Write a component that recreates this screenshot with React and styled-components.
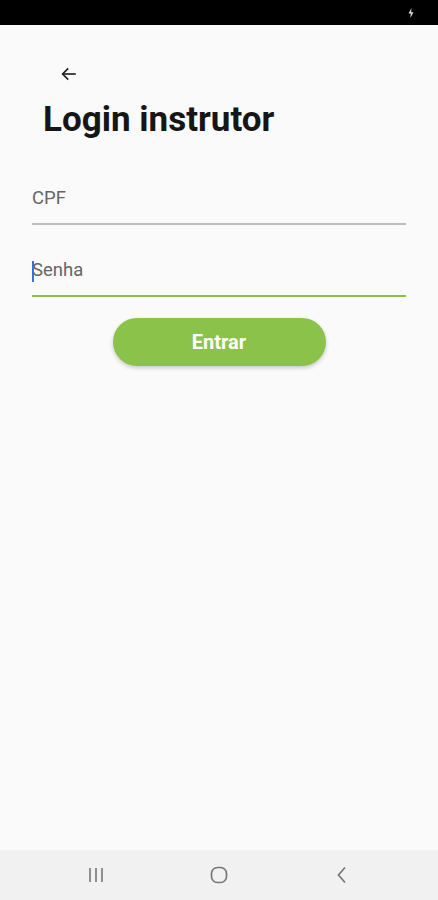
import React from 'react'
import styled, { createGlobalStyle } from 'styled-components'

const GlobalStyle = createGlobalStyle`
    html, body {
        margin: 0;
        padding: 0;
        background: #fafafa;
        font-family: Roboto, "Liberation Sans", sans-serif;
    }
`

const Screen = styled.div`
    width: 438px;
    height: 900px;
    display: flex;
    flex-direction: column;
    background: #fafafa;
`

const StatusBar = styled.div`
    height: 25px;
    background: #000;
    display: flex;
    justify-content: flex-end;
    align-items: center;
    padding-right: 24px;
    flex-shrink: 0;
`

const Content = styled.div`
    flex: 1;
    display: flex;
    flex-direction: column;
    padding: 0 32px;
`

const BackButton = styled.button`
    background: none;
    border: none;
    padding: 0;
    margin: 37px 0 0 25px;
    width: 24px;
    height: 24px;
    display: flex;
    align-items: center;
    justify-content: center;
    color: #212121;
`

const Title = styled.h1`
    margin: 13px 0 0 11px;
    font-size: 35px;
    font-weight: 700;
    color: #161616;
    line-height: 42px;
`

const Field = styled.div`
    display: flex;
    align-items: center;
    height: 50px;
    box-sizing: border-box;
    padding-bottom: 2px;
    margin-top: ${p => p.top}px;
    border-bottom: 2px solid ${p => (p.focused ? '#8bc34a' : '#bdbdbd')};
    font-size: 18.5px;
    color: #666;
    position: relative;
`

const Caret = styled.span`
    position: absolute;
    left: 0;
    top: 14px;
    width: 2px;
    height: 21px;
    background: #3b6fd8;
`

const ButtonRow = styled.div`
    display: flex;
    justify-content: center;
    margin-top: 21px;
`

const SubmitButton = styled.button`
    width: 213px;
    height: 48px;
    border: none;
    border-radius: 24px;
    background: #8bc34a;
    color: #fff;
    font-family: Roboto, "Liberation Sans", sans-serif;
    font-size: 20px;
    font-weight: 700;
    box-shadow: 0 2px 4px rgba(0, 0, 0, 0.2);
`

const NavBar = styled.div`
    height: 50px;
    background: #f1f1f1;
    display: flex;
    justify-content: center;
    align-items: center;
    gap: 99px;
    flex-shrink: 0;
`

const NavIcon = styled.div`
    width: 24px;
    display: flex;
    justify-content: center;
    color: #777;
`

export default function App() {
    return (
        <>
            <GlobalStyle />
            <Screen>
                <StatusBar>
                    <svg width="6" height="10" viewBox="0 0 6 10">
                        <path d="M3.5 0 L0.5 5.5 H2.8 L2.3 10 L5.5 4.3 H3.2 Z" fill="#ddd" />
                    </svg>
                </StatusBar>
                <Content>
                    <BackButton>
                        <svg width="18" height="18" viewBox="0 0 24 24" fill="none" stroke="#212121" strokeWidth="2.2">
                            <path d="M21 12 H3.5" />
                            <path d="M11 4.5 L3.5 12 L11 19.5" />
                        </svg>
                    </BackButton>
                    <Title>Login instrutor</Title>
                    <Field top={34}>CPF</Field>
                    <Field top={22} focused>
                        <Caret />
                        Senha
                    </Field>
                    <ButtonRow>
                        <SubmitButton>Entrar</SubmitButton>
                    </ButtonRow>
                </Content>
                <NavBar>
                    <NavIcon>
                        <svg width="18" height="16" viewBox="0 0 18 16" stroke="#777" strokeWidth="1.6">
                            <path d="M3 1 V15 M9 1 V15 M15 1 V15" />
                        </svg>
                    </NavIcon>
                    <NavIcon>
                        <svg width="18" height="18" viewBox="0 0 18 18" fill="none" stroke="#777" strokeWidth="1.7">
                            <rect x="1.5" y="1.5" width="15" height="15" rx="6" />
                        </svg>
                    </NavIcon>
                    <NavIcon>
                        <svg width="12" height="18" viewBox="0 0 12 18" fill="none" stroke="#777" strokeWidth="1.7">
                            <path d="M9 1.5 L2.5 9 L9 16.5" />
                        </svg>
                    </NavIcon>
                </NavBar>
            </Screen>
        </>
    )
}
